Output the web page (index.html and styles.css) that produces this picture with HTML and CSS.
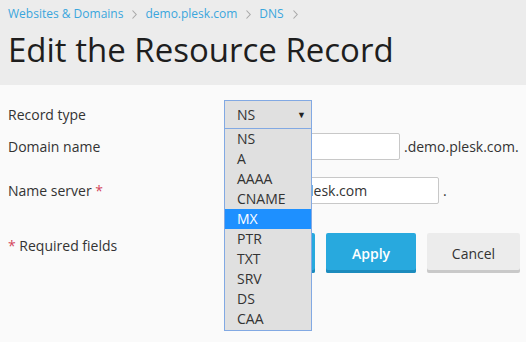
FILE: index.html
```html
<!DOCTYPE html>
<html lang="en">
<head>
  <meta charset="UTF-8">
  <title>Edit the Resource Record</title>
  <link rel="stylesheet" href="styles.css">
</head>
<body>
  <header class="page-header">
    <div class="breadcrumbs">
      <a href="#">Websites &amp; Domains</a>
      <svg class="sep" width="5" height="9" viewBox="0 0 5 9"><path d="M0.5 0.5 L4.2 4.5 L0.5 8.5" fill="none" stroke="#a8a8a8" stroke-width="1.1"/></svg>
      <a href="#">demo.plesk.com</a>
      <svg class="sep" width="5" height="9" viewBox="0 0 5 9"><path d="M0.5 0.5 L4.2 4.5 L0.5 8.5" fill="none" stroke="#a8a8a8" stroke-width="1.1"/></svg>
      <a href="#">DNS</a>
      <svg class="sep" width="5" height="9" viewBox="0 0 5 9"><path d="M0.5 0.5 L4.2 4.5 L0.5 8.5" fill="none" stroke="#a8a8a8" stroke-width="1.1"/></svg>
    </div>
    <h1>Edit the Resource Record</h1>
  </header>

  <form class="record-form">
    <div class="row row-type">
      <label>Record type</label>
      <div class="field">
        <div class="select-wrap">
          <div class="select">NS<span class="arrow">&#9660;</span></div>
          <ul class="options">
            <li>NS</li>
            <li>A</li>
            <li>AAAA</li>
            <li>CNAME</li>
            <li class="active">MX</li>
            <li>PTR</li>
            <li>TXT</li>
            <li>SRV</li>
            <li>DS</li>
            <li>CAA</li>
          </ul>
        </div>
      </div>
    </div>
    <div class="row row-domain">
      <label>Domain name</label>
      <div class="field">
        <input type="text" class="input input-domain" value="">
        <span class="suffix">.demo.plesk.com.</span>
      </div>
    </div>
    <div class="row row-ns">
      <label>Name server <span class="req">*</span></label>
      <div class="field">
        <input type="text" class="input input-ns" value="ns.demo.plesk.com">
        <span class="suffix">.</span>
      </div>
    </div>
    <div class="row row-buttons">
      <label><span class="req">*</span> Required fields</label>
      <div class="field buttons">
        <button type="button" class="btn btn-primary btn-ok">OK</button>
        <button type="button" class="btn btn-primary">Apply</button>
        <button type="button" class="btn btn-cancel">Cancel</button>
      </div>
    </div>
  </form>
</body>
</html>
```

FILE: styles.css
```css
html, body {
  height: 100%;
}
body {
  margin: 0;
  font-family: 'Open Sans', 'Noto Sans', sans-serif;
  background: #fafafa;
  color: #333;
  font-size: 14px;
}
.page-header {
  background: #ececec;
  height: 85px;
  padding: 5px 8px 0;
  box-sizing: border-box;
}
.breadcrumbs {
  font-size: 12px;
  line-height: 17px;
  display: flex;
  align-items: center;
}
.breadcrumbs a {
  color: #3aa6dd;
  text-decoration: none;
}
.breadcrumbs .sep {
  margin: 1px 8px 0 9px;
}
h1 {
  margin: 7px 0 0;
  font-size: 33px;
  font-weight: normal;
  color: #1e1e1e;
  line-height: 42px;
}
.record-form {
  padding: 15px 8px 0;
}
.row {
  display: grid;
  grid-template-columns: 216px auto;
  align-items: center;
}
.row label {
  line-height: 20px;
}
.field {
  display: flex;
  align-items: center;
}
.row-type {
  height: 29px;
}
.row-domain {
  margin-top: 4px;
  height: 27px;
}
.row-ns {
  margin-top: 17px;
  height: 27px;
}
.row-buttons {
  margin-top: 29px;
  align-items: start;
}
.row-buttons label {
  margin-top: 3px;
}
.req {
  color: #d4465c;
}
.select-wrap {
  position: relative;
  width: 88px;
}
.select {
  height: 29px;
  box-sizing: border-box;
  border: 1px solid #82a9e3;
  background: #e0e0e0;
  padding: 0 0 0 12px;
  line-height: 27px;
  position: relative;
}
.arrow {
  position: absolute;
  right: 5px;
  top: 0;
  font-size: 9px;
  color: #222;
}
.options {
  position: absolute;
  z-index: 2;
  top: 29px;
  left: 0;
  width: 88px;
  box-sizing: border-box;
  margin: 0;
  padding: 0 0 1px;
  list-style: none;
  background: #e0e0e0;
  border: 1px solid #82a9e3;
  border-top: none;
}
.options li {
  height: 20px;
  line-height: 20px;
  padding-left: 12px;
}
.options li.active {
  background: #1e90ff;
  color: #fff;
}
.input {
  font: inherit;
  color: #333;
  border: 1px solid #c8c8c8;
  border-radius: 2px;
  background: #fff;
  height: 27px;
  box-sizing: border-box;
  padding: 0 8px;
}
.input-domain {
  width: 176px;
}
.input-ns {
  width: 215px;
  padding-left: 16px;
}
.suffix {
  margin-left: 4px;
}
.buttons {
  gap: 11px;
}
.btn {
  font: inherit;
  height: 40px;
  border: none;
  border-radius: 2px;
  cursor: pointer;
}
.btn-primary {
  background: #28a9de;
  color: #fff;
  font-weight: 600;
  width: 90px;
  box-shadow: inset 0 -3px 0 #1c8bbd;
}
.btn-ok {
  width: 91px;
}
.btn-cancel {
  background: #ececec;
  color: #333;
  width: 93px;
  box-shadow: inset 0 -3px 0 #c9c9c9;
}
```
